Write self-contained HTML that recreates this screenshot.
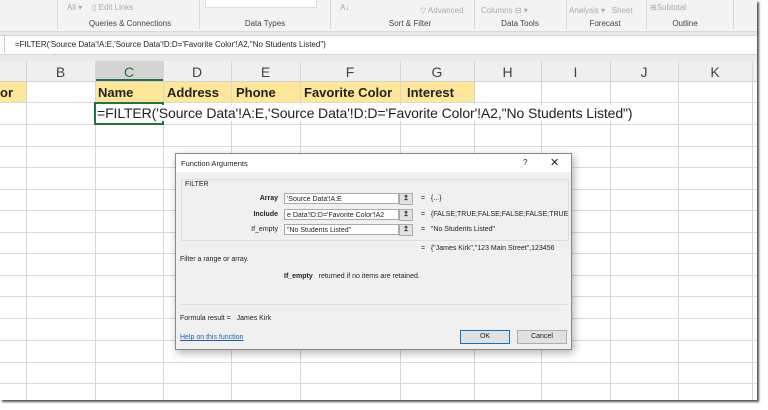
<!DOCTYPE html>
<html><head><style>
body{margin:0;width:768px;height:410px;background:#fff;position:relative;overflow:hidden;font-family:"Liberation Sans",sans-serif}
.a{position:absolute}
.shot{left:0;top:0;width:757px;height:400px;background:#fff;overflow:hidden;box-shadow:2px 2px 2px #555}
.rib{left:0;top:0;width:757px;height:31px;background:#f3f3f3;border-bottom:1px solid #dadada}
.gl{font-size:8px;color:#444;top:19px;text-align:center}
.gt{font-size:8px;color:#aaa;top:3px;white-space:nowrap}
.sep{top:0;width:1px;height:29px;background:#d8d8d8}
.fb{left:0;top:35px;width:757px;height:18px;background:#fff;border-top:1px solid #d6d6d6;border-bottom:1px solid #d6d6d6}
.gray{left:0;top:31px;width:757px;height:30px;background:#e9e9e9}
.hdr{top:61px;height:20px;background:#efefef;border-bottom:1px solid #d0d0d0;width:757px;left:0}
.cl{font-size:14px;color:#444;top:64px;text-align:center}
.v{width:1px;background:#d6d6d6;top:61px;height:340px}
.h{height:1px;background:#dadada;left:0;width:757px}
.y{background:#ffe699;top:82px;height:20px}
.b{font-size:13px;font-weight:bold;color:#222;top:85px;white-space:nowrap}
.dlg{left:175px;top:153px;width:395px;height:195px;background:#f0f0f0;border:1px solid #888;box-shadow:2px 3px 8px rgba(0,0,0,.3);font-size:7px;color:#222}
.tb{background:#fff;border:1px solid #aaa;height:11px;font-size:7px;line-height:11px;padding-left:2px;box-sizing:border-box;white-space:nowrap;overflow:hidden}
.btn{border:1px solid #adadad;background:#e1e1e1;height:12px;box-sizing:border-box;font-size:7px;text-align:center;line-height:10px}
.lb{font-weight:bold;text-align:right;width:60px}
</style></head><body>
<div class="a shot">
<div class="a gray"></div>
<div class="a rib">
<div class="a gt" style="left:67px">All ▾</div><div class="a gt" style="left:92px">▯ Edit Links</div>
<div class="a" style="left:205px;top:-1px;width:110px;height:7px;background:#fff;border:1px solid #ddd"></div>
<div class="a gt" style="left:340px">A↓</div>
<div class="a gt" style="left:420px;top:6px">▽ Advanced</div>
<div class="a gt" style="left:481px;top:6px">Columns ⊟ ▾</div>
<div class="a gt" style="left:569px;top:6px">Analysis ▾ &nbsp; Sheet</div>
<div class="a gt" style="left:650px">⊞Subtotal</div>
<div class="a sep" style="left:57px"></div><div class="a sep" style="left:199px"></div><div class="a sep" style="left:330px"></div><div class="a sep" style="left:474px"></div><div class="a sep" style="left:566px"></div><div class="a sep" style="left:646px"></div><div class="a sep" style="left:733px"></div>
<div class="a gl" style="left:80px;width:100px">Queries &amp; Connections</div>
<div class="a gl" style="left:230px;width:70px">Data Types</div>
<div class="a gl" style="left:370px;width:80px">Sort &amp; Filter</div>
<div class="a gl" style="left:480px;width:80px">Data Tools</div>
<div class="a gl" style="left:570px;width:70px">Forecast</div>
<div class="a gl" style="left:650px;width:70px">Outline</div>
</div>
<div class="a fb"><div class="a" style="left:4px;top:-1px;width:1px;height:18px;background:#ccc"></div><div class="a" style="left:15px;top:4px;font-size:8px;color:#222">=FILTER('Source Data'!A:E,'Source Data'!D:D='Favorite Color'!A2,"No Students Listed")</div></div>
<div class="a hdr"></div>
<div class="a" style="left:95px;top:61px;width:68px;height:20px;background:#d4d4d4;border-bottom:2px solid #217346;box-sizing:border-box"></div>
<div class="a cl" style="left:26px;width:69px">B</div><div class="a cl" style="left:95px;width:68px;color:#217346">C</div><div class="a cl" style="left:163px;width:68px">D</div><div class="a cl" style="left:231px;width:69px">E</div><div class="a cl" style="left:300px;width:100px">F</div><div class="a cl" style="left:400px;width:74px">G</div><div class="a cl" style="left:474px;width:67px">H</div><div class="a cl" style="left:541px;width:69px">I</div><div class="a cl" style="left:610px;width:68px">J</div><div class="a cl" style="left:678px;width:74px">K</div>
<div class="a y" style="left:0;width:26px"></div><div class="a y" style="left:95px;width:379px"></div>
<div class="a h" style="top:102px"></div><div class="a h" style="top:124px"></div><div class="a h" style="top:146px"></div><div class="a h" style="top:167px"></div><div class="a h" style="top:189px"></div><div class="a h" style="top:210px"></div><div class="a h" style="top:232px"></div><div class="a h" style="top:253px"></div><div class="a h" style="top:275px"></div><div class="a h" style="top:296px"></div><div class="a h" style="top:318px"></div><div class="a h" style="top:340px"></div><div class="a h" style="top:362px"></div><div class="a h" style="top:383px"></div>
<div class="a v" style="left:26px"></div><div class="a v" style="left:95px"></div><div class="a v" style="left:163px"></div><div class="a v" style="left:231px"></div><div class="a v" style="left:300px"></div><div class="a v" style="left:400px"></div><div class="a v" style="left:474px"></div><div class="a v" style="left:541px"></div><div class="a v" style="left:610px"></div><div class="a v" style="left:678px"></div><div class="a v" style="left:752px"></div>
<div class="a b" style="left:0">or</div><div class="a b" style="left:98px">Name</div><div class="a b" style="left:167px">Address</div><div class="a b" style="left:236px">Phone</div><div class="a b" style="left:304px">Favorite Color</div><div class="a b" style="left:407px">Interest</div>
<div class="a" style="left:94px;top:102px;width:70px;height:23px;border:2px solid #217346;box-sizing:border-box"></div>
<div class="a" style="left:97px;top:105px;font-size:14px;color:#222;background:#fff;white-space:nowrap;letter-spacing:-0.1px">=FILTER('Source Data'!A:E,'Source Data'!D:D='Favorite Color'!A2,"No Students Listed")</div>
<div class="a dlg">
<div class="a" style="left:0;top:0;width:395px;height:18px;background:#fff"></div>
<div class="a" style="left:5px;top:5px;font-size:7.5px">Function Arguments</div>
<div class="a" style="left:347px;top:4px;font-size:8px">?</div><div class="a" style="left:374px;top:2px;font-size:11px">✕</div>
<div class="a" style="left:5px;top:25px;width:386px;height:60px;border:1px solid #ddd"></div>
<div class="a" style="left:9px;top:27px">FILTER</div>
<div class="a lb" style="left:42px;top:41px">Array</div><div class="a tb" style="left:108px;top:39px;width:115px">'Source Data'!A:E</div><div class="a btn" style="left:223px;top:39px;width:14px;font-weight:bold">↥</div><div class="a" style="left:245px;top:41px">= &nbsp; {...}</div>
<div class="a lb" style="left:42px;top:57px">Include</div><div class="a tb" style="left:108px;top:55px;width:115px">e Data'!D:D='Favorite Color'!A2</div><div class="a btn" style="left:223px;top:55px;width:14px;font-weight:bold">↥</div><div class="a" style="left:245px;top:57px;white-space:nowrap">= &nbsp; {FALSE;TRUE;FALSE;FALSE;FALSE;TRUE</div>
<div class="a lb" style="left:42px;top:72px;font-weight:normal">If_empty</div><div class="a tb" style="left:108px;top:70px;width:115px">"No Students Listed"</div><div class="a btn" style="left:223px;top:70px;width:14px;font-weight:bold">↥</div><div class="a" style="left:245px;top:72px">= &nbsp; "No Students Listed"</div>
<div class="a" style="left:245px;top:91px;white-space:nowrap">= &nbsp; {"James Kirk","123 Main Street",123456</div>
<div class="a" style="left:4px;top:102px">Filter a range or array.</div>
<div class="a" style="left:108px;top:119px"><b>If_empty</b> &nbsp; returned if no items are retained.</div>
<div class="a" style="left:4px;top:150px;width:387px;height:1px;background:#ddd"></div>
<div class="a" style="left:4px;top:161px">Formula result = &nbsp; James Kirk</div>
<div class="a" style="left:4px;top:180px;color:#1a5fb4;text-decoration:underline">Help on this function</div>
<div class="a btn" style="left:284px;top:176px;width:50px;height:14px;line-height:12px;border:1px solid #0078d7">OK</div>
<div class="a btn" style="left:341px;top:176px;width:50px;height:14px;line-height:12px">Cancel</div>
</div>
</div>
</body></html>
